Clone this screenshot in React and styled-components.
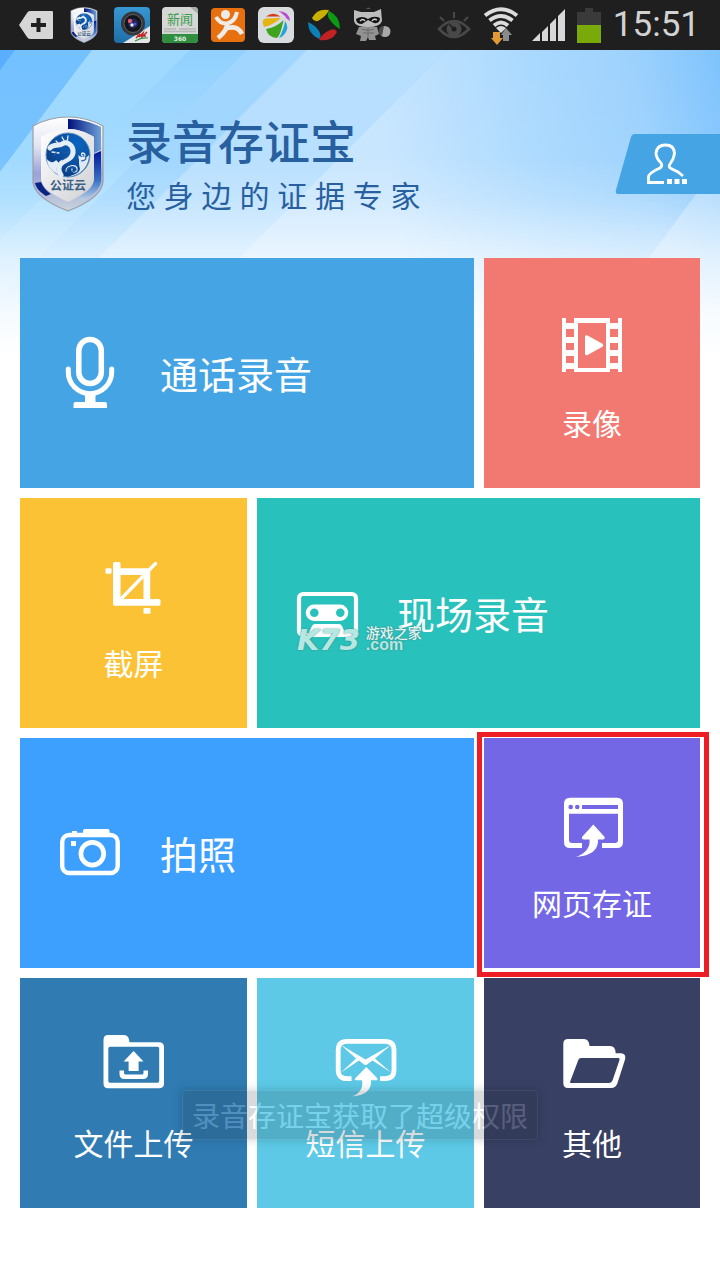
import React from 'react';
import styled, { createGlobalStyle } from 'styled-components';

const GlobalStyle = createGlobalStyle`
  * {
    box-sizing: border-box;
  }
  body {
    margin: 0;
    background-color: #ffffff;
    font-family: "Noto Sans CJK SC", "Noto Sans", sans-serif;
  }
  svg {
    display: block;
    flex: none;
    overflow: visible;
  }
`;

const Page = styled.div`
  position: relative;
  min-height: 100vh;
  overflow: hidden;
`;

// Status bar
const StatusBar = styled.div`
  position: relative;
  display: flex;
  justify-content: space-between;
  align-items: center;
  height: 50px;
  padding: 0 20px 0 18px;
  background-color: #1f1f1f;
`;

const StatusGroup = styled.div`
  display: flex;
  align-items: center;
  gap: 12px;
`;

const Clock = styled.time`
  font-family: Roboto, sans-serif;
  font-size: 35px;
  line-height: 48px;
  color: #d2d2d2;
`;

// Header
const Sky = styled.svg`
  position: absolute;
  top: 50px;
  left: 0;
  width: 100%;
  height: 310px;
`;

const Header = styled.header`
  position: relative;
  display: flex;
  align-items: flex-start;
  gap: 22px;
  height: 208px;
  padding: 66px 0 0 32px;
`;

const Heading = styled.div`
  flex: 1;
  color: #285f9f;
`;

const Title = styled.h1`
  margin: 0 0 14px;
  font-size: 46px;
  line-height: 46px;
  font-weight: 500;
`;

const Slogan = styled.p`
  margin: 0;
  font-family: "Noto Sans", "Noto Sans CJK SC", sans-serif;
  font-size: 30px;
  line-height: 40px;
  white-space: nowrap;
`;

const AccountButton = styled.button`
  margin-top: 18px;
  padding: 0;
  border: none;
  background: none;
  cursor: pointer;
`;

// Tiles
const Tiles = styled.main`
  position: relative;
  display: grid;
  grid-template-columns: 227fr 217fr 216fr;
  grid-auto-rows: 230px;
  gap: 10px;
  padding: 0 20px;
`;

const Tile = styled.button`
  position: relative;
  display: flex;
  flex-direction: ${(p) => (p.$wide ? 'row' : 'column')};
  align-items: center;
  gap: ${(p) => (p.$wide ? '38px' : '26px')};
  grid-column: span ${(p) => (p.$wide ? 2 : 1)};
  padding: ${(p) => (p.$wide ? '0 38px' : '56px 0 0')};
  border: none;
  background-color: ${(p) => p.$color};
  color: #ffffff;
  font-family: inherit;
  font-weight: 400;
  font-size: ${(p) => (p.$wide ? '38px' : '30px')};
  line-height: ${(p) => (p.$wide ? '46px' : '36px')};
  cursor: pointer;
`;

const Highlight = styled.span`
  position: absolute;
  top: -6px;
  right: -9px;
  bottom: -9px;
  left: -7px;
  border: 5px solid #ee1c24;
`;

const Watermark = styled.span`
  position: absolute;
  top: 127px;
  left: 40px;
  display: flex;
  align-items: flex-start;
  gap: 6px;
  color: #b5e8e2;
  text-shadow: 0 0 2px #47807f;
`;

const WatermarkLogo = styled.span`
  font: italic bold 29px/30px "DejaVu Sans", sans-serif;
`;

const WatermarkName = styled.span`
  display: grid;
  text-align: left;
  font-size: 14px;
  line-height: 14px;
  font-weight: 500;
  color: #e4f3f1;
`;

const WatermarkDomain = styled.span`
  font: bold 16px/12px "Liberation Sans", sans-serif;
  color: #b5e8e2;
`;

const Toast = styled.div`
  position: absolute;
  top: 832px;
  left: 50%;
  transform: translateX(-50%);
  padding: 4px 9px;
  border: 1px solid #777777;
  border-radius: 4px;
  background-color: #1c2228;
  box-shadow: 0 0 8px #000000;
  color: #ffffff;
  font-size: 28px;
  line-height: 40px;
  white-space: nowrap;
  opacity: 0.16;
  pointer-events: none;
`;

function Shield({ width, height, id }) {
  return (
    <svg width={width} height={height} viewBox="0 0 72 96">
      <defs>
        <linearGradient id={id + 'rim'} x1="0" y1="0" x2="0" y2="1">
          <stop offset="0" stopColor="#ffffff" />
          <stop offset="0.3" stopColor="#e4e6f2" />
          <stop offset="0.6" stopColor="#9ba2d8" />
          <stop offset="1" stopColor="#c9d3dc" />
        </linearGradient>
        <linearGradient id={id + 'blue'} x1="0" y1="0" x2="1" y2="0">
          <stop offset="0" stopColor="#00107c" />
          <stop offset="1" stopColor="#6fa0d8" />
        </linearGradient>
        <linearGradient id={id + 'side'} x1="0" y1="0" x2="0" y2="1">
          <stop offset="0" stopColor="#00189a" />
          <stop offset="0.6" stopColor="#3c74c4" />
          <stop offset="1" stopColor="#c0d4e8" />
        </linearGradient>
        <linearGradient id={id + 'body'} x1="0" y1="0" x2="1" y2="1">
          <stop offset="0" stopColor="#ffffff" />
          <stop offset="1" stopColor="#cfd0d3" />
        </linearGradient>
        <radialGradient id={id + 'ball'} cx="0.7" cy="0.25" r="0.8">
          <stop offset="0" stopColor="#0a66c0" />
          <stop offset="1" stopColor="#0b3d84" />
        </radialGradient>
      </defs>
      <path d="M36 1C48 1 60 4 71 10V66C70 78 54 88 36 95C18 88 2 78 1 66V10C12 4 24 1 36 1Z" fill={`url(#${id}rim)`} stroke="#9a9fa6" strokeWidth="1.2" />
      <path d="M36 3C48 3 59 6 69 11V34L62 37V21C54 16 45 13 36 13Z" fill={`url(#${id}blue)`} />
      <path d="M62 38L69 35V65C68 74 60 80 50 85L46 80C56 76 62 71 62 62Z" fill={`url(#${id}side)`} />
      <path d="M3 67L9 66C11 71 14 75 19 78L14 80C8 76 4 72 3 67Z" fill="#0a2484" />
      <path d="M36 13C46 13 54 16 62 21V62C62 73 48 80 36 86C24 80 9 73 9 62V21C18 16 27 13 36 13Z" fill={`url(#${id}body)`} />
      <circle cx="36" cy="39" r="22" fill={`url(#${id}ball)`} stroke="#5a8fc4" strokeWidth="1" />
      <path d="M15 43C18 47 22 47 24 44L27 47C24 51 24 56 27 58.500C19 56 15 49 15 43Z" fill="#e5edf6" />
      <path d="M57 39C57 50 49 60 36 60.500C42 59 47 57 48 53C46 47 48 43 46 39C50 42 55 42 57 39Z" fill="#dfe8f3" />
      <path d="M18 32C22 27 26 31 30 28C34 25 40 28 41 34C42 42 35 44 31 46C26 49 26 55 29 59" fill="none" stroke="#e5edf6" strokeWidth="5" strokeLinecap="round" />
      <g fill="none" stroke="#e5edf6" strokeLinecap="round" strokeWidth="1.3">
        <path d="M30 21L34 28M36 20L35 27M24 25L28 29M20 36L27 37" />
        <path d="M34 55C34 49 46 47 45 54C44 57 39 56 40 53M47 42C53 44 55 38 51 37C49 37 49 40 51 40" />
      </g>
      <g fill="none" stroke="#1a5ba4" strokeWidth="1.2">
        <path d="M27 32L34 33M30 36L37 37M25 35L22 40M37 34C39 39 35 42 30 44" />
        <path d="M35 55C35 51 44 49 44 54C43 56 40 56 40 54M49 45C54 45 55 42 53 40" />
      </g>
      <text x="36" y="74" textAnchor="middle" fontSize="12" fontWeight="700" fill="#3b5f87">公证云</text>
    </svg>
  );
}

function BackIcon() {
  return (
    <svg width="36" height="36" viewBox="0 0 36 36">
      <path d="M1 18L9 6Q10 4 12 4H34Q35 4 35 5V31Q35 32 34 32H12Q10 32 9 30Z" fill="#d6d6d6" />
      <path d="M20.500 11V25M13 18H28" stroke="#1f1f1f" strokeWidth="4" />
    </svg>
  );
}

function CameraAppIcon() {
  return (
    <svg width="36" height="36" viewBox="0 0 36 36">
      <defs>
        <linearGradient id="camapp" x1="0" y1="0" x2="0" y2="1">
          <stop offset="0" stopColor="#3798d4" />
          <stop offset="1" stopColor="#1f6da6" />
        </linearGradient>
      </defs>
      <rect width="36" height="36" rx="4" fill="url(#camapp)" />
      <path d="M9 36L36 19V33Q36 36 33 36Z" fill="#e4e6e8" />
      <circle cx="19" cy="16.500" r="12" fill="#34383d" />
      <circle cx="19" cy="16.500" r="9" fill="#14161a" stroke="#5a5f66" strokeWidth="1" />
      <circle cx="19" cy="16.500" r="5" fill="#20265c" />
      <circle cx="16" cy="14" r="2.200" fill="#e05a7a" />
      <circle cx="18" cy="18" r="1.800" fill="#e8e8f4" />
      <circle cx="21" cy="17" r="1.500" fill="#4a54e0" />
      <path d="M22 31L26 27L25 30L29 26L28 30L33 25M23 29H32" stroke="#c22a2a" strokeWidth="1.600" fill="none" />
      <path d="M21 34Q28 30 34 31" stroke="#3a9a4a" strokeWidth="1.200" fill="none" />
    </svg>
  );
}

function NewsIcon() {
  return (
    <svg width="36" height="36" viewBox="0 0 36 36">
      <rect width="36" height="36" rx="4" fill="#d5d7d5" />
      <path d="M28 0H32Q36 0 36 4V7Z" fill="#a9ada9" />
      <path d="M2 22H14M17 22H34M2 24.500H34" stroke="#b4b8b4" strokeWidth="1.400" />
      <path d="M0 27H36V32Q36 36 32 36H4Q0 36 0 32Z" fill="#2f8f3e" />
      <text x="18" y="17" textAnchor="middle" fontSize="13" fill="#3c9c4c">新闻</text>
      <text x="18" y="34" textAnchor="middle" fontSize="6" fontWeight="700" fontFamily="DejaVu Sans, sans-serif" fill="#e2efe2">360</text>
    </svg>
  );
}

function ReviewIcon() {
  return (
    <svg width="36" height="36" viewBox="0 0 36 36">
      <rect x="1" y="1" width="34" height="34" rx="4" fill="#e8700f" />
      <circle cx="15.500" cy="7.500" r="4.500" fill="#efebe6" />
      <path d="M6 10Q10 17 17 16.500Q25 15 27 5" fill="none" stroke="#efebe6" strokeWidth="4" />
      <path d="M17 16Q18 23 8 31M15 22Q27 17 32 27" fill="none" stroke="#efebe6" strokeWidth="4.600" />
    </svg>
  );
}

function LeafIcon() {
  return (
    <svg width="36" height="36" viewBox="0 0 36 36">
      <rect width="36" height="36" rx="6" fill="#d9dcdf" />
      <path d="M8 9.500Q15 4 22.500 9.500Z" fill="#d93a18" />
      <path d="M20 4Q31 4 32 14L28.500 11.500Q26 7 20 4Z" fill="#b84bd2" />
      <path d="M6 20Q3 13 7 11.500L23 11Q15 18 6 20Z" fill="#e6b411" />
      <path d="M8 22Q19 20 25.500 13Q22 31 18 31Q10 30 8 22Z" fill="#3fa320" />
      <path d="M27 14Q31 20 28 25Q25 30 21 31Q26 22 27 14Z" fill="#24a5d8" />
    </svg>
  );
}

function RingIcon() {
  return (
    <svg width="36" height="36" viewBox="0 0 36 36">
      <path d="M6 11Q11 1 23 3Q21 8 15 12Q9 17 6 11Z" fill="#c9b000" />
      <path d="M23 4Q34 9 34 22Q28 19 24 13Q20 8 23 4Z" fill="#0d9a12" />
      <path d="M31 25Q26 35 13 33Q16 27 22 24Q29 20 31 25Z" fill="#c22222" />
      <path d="M13 32Q2 27 2 15Q9 18 13 24Q16 29 13 32Z" fill="#0c80b4" />
    </svg>
  );
}

function RaccoonIcon() {
  return (
    <svg width="36" height="36" viewBox="0 0 36 36">
      <circle cx="31" cy="24.500" r="5.500" fill="#a8a8a8" />
      <path d="M25 26Q24 19 30 19L28 29Z" fill="#4c4c4c" />
      <path d="M0 3L7 5H20L27 2L28 14Q26 20 14 20Q1 20 0 14Z" fill="#bdbdbd" />
      <path d="M12 2Q14 -1 17 2Z" fill="#555" />
      <path d="M2 12Q8 8 14 12Q20 8 26 11Q26 17 20 16L14 13L8 17Q2 17 2 12Z" fill="#151515" />
      <path d="M6 14Q9 11 11 14M18 14Q20 11 23 13" stroke="#d6d6d6" strokeWidth="1.300" fill="none" />
      <path d="M5 20H23L25 27L21 29L22 33H15L14 30L12 34H6L7 29L2 27Z" fill="#929292" />
      <path d="M8 22Q14 25 20 22M9 26H20M14 21V30" stroke="#6a6a6a" strokeWidth="1" fill="none" />
    </svg>
  );
}

function EyeIcon() {
  return (
    <svg width="34" height="36" viewBox="0 0 34 36">
      <path d="M2 22Q17 6 32 22Q17 38 2 22Z" fill="none" stroke="#484848" strokeWidth="2.600" />
      <circle cx="17" cy="22" r="7.500" fill="#484848" />
      <circle cx="17" cy="22" r="2.500" fill="#1f1f1f" />
      <path d="M17 22L12 17" stroke="#1f1f1f" strokeWidth="1.500" />
      <path d="M17 5V11M3 10L7 14M31 10L27 14" stroke="#484848" strokeWidth="2.200" />
    </svg>
  );
}

function WifiIcon() {
  return (
    <svg width="36" height="36" viewBox="0 0 36 36">
      <g fill="none" stroke="#dcdcdc" strokeWidth="4">
        <path d="M2 8.500Q18 -4 34 8.500" />
        <path d="M6.500 13.500Q18 4.500 29.500 13.500" />
        <path d="M11 18.500Q18 12.500 25 18.500" />
      </g>
      <path d="M13 21Q18 17 23 21L18 26Z" fill="#dcdcdc" />
      <path d="M10 25H17V31H20L14 38L8 31H10Z" fill="#e09a35" />
      <path d="M20 34H26V28H29L23 21L18 28H20Z" fill="#8b8b8b" />
    </svg>
  );
}

function SignalIcon() {
  return (
    <svg width="34" height="36" viewBox="0 0 34 36">
      <path d="M1 34L9 26V34ZM11 34V25L17 19V34ZM19 34V17L25 11V34ZM27 34V9L34 2V34Z" fill="#d8d8d8" />
    </svg>
  );
}

function BatteryIcon() {
  return (
    <svg width="24" height="36" viewBox="0 0 24 36">
      <path d="M0 5H8V1H16V5H24V18H0Z" fill="#3a3a3a" />
      <path d="M0 18H24V36H0Z" fill="#7aaa09" />
    </svg>
  );
}

function SkyBackground() {
  return (
    <Sky viewBox="0 0 720 310" preserveAspectRatio="none">
      <defs>
        <linearGradient id="skyBase" x1="0" y1="0" x2="0" y2="1">
          <stop offset="0" stopColor="#8bcfff" />
          <stop offset="1" stopColor="#bfe6ff" />
        </linearGradient>
        <linearGradient id="skyRight" gradientUnits="userSpaceOnUse" x1="380" y1="80" x2="720" y2="20">
          <stop offset="0" stopColor="#c8e6ff" />
          <stop offset="0.45" stopColor="#abd9fe" />
          <stop offset="0.75" stopColor="#9ed2fd" />
          <stop offset="1" stopColor="#80c4fd" />
        </linearGradient>
        <linearGradient id="skyFade" x1="0" y1="0" x2="0" y2="1">
          <stop offset="0" stopColor="#fff" stopOpacity="0" />
          <stop offset="0.35" stopColor="#fff" stopOpacity="0.02" />
          <stop offset="0.48" stopColor="#fff" stopOpacity="0.18" />
          <stop offset="0.67" stopColor="#fff" stopOpacity="0.62" />
          <stop offset="0.85" stopColor="#fff" stopOpacity="0.9" />
          <stop offset="1" stopColor="#fff" stopOpacity="1" />
        </linearGradient>
        <linearGradient id="skyBand" x1="0" y1="0" x2="0" y2="1">
          <stop offset="0" stopColor="#92d1ff" />
          <stop offset="0.5" stopColor="#a8dcff" />
        </linearGradient>
      </defs>
      <path d="M0 0H720V310H0Z" fill="url(#skyBase)" />
      <path d="M0 0H92L0 122Z" fill="#74c1ff" />
      <path d="M0 0H15L0 20Z" fill="#5aaeff" />
      <path d="M92 0H190L0 190V122Z" fill="#9fd9ff" />
      <path d="M190 0H247L0 247V190Z" fill="url(#skyBand)" />
      <path d="M247 0H307L0 307V247Z" fill="#a0d6ff" />
      <path d="M307 0H447L137 310H0V307Z" fill="#b7dfff" />
      <path d="M447 0H720V310H137Z" fill="url(#skyRight)" />
      <path d="M720 112L625 240L580 310H720Z" fill="#fff" fillOpacity="0.3" />
      <path d="M0 0H720V310H0Z" fill="url(#skyFade)" />
    </Sky>
  );
}

function AccountIcon() {
  return (
    <svg width="105" height="60" viewBox="0 0 105 60">
      <path d="M20 0H105V60H3Q0 60 1 56L16 3Q17 0 20 0Z" fill="#45a5e4" />
      <path d="M49 48.500H33.500V43Q33.500 39 45 34Q48 32 46 29Q41 24 41 19Q42 11 50.500 11Q59 11 59.500 19Q59 25 55 30Q53 33 56 34.500L63 38L68 42" fill="none" stroke="#fff" strokeWidth="2.800" />
      <path d="M52 45H57V50H52ZM59.500 45H64.500V50H59.500ZM67 45H72V50H67Z" fill="#fff" />
    </svg>
  );
}

function MicIcon() {
  return (
    <svg width="64" height="80" viewBox="0 0 64 80" fill="none" stroke="#fff">
      <rect x="20.800" y="6.500" width="22.500" height="44" rx="11.200" strokeWidth="5.500" />
      <path d="M10.300 36V39A21.700 21.700 0 0 0 53.700 39V36" strokeWidth="5" strokeLinecap="round" />
      <path d="M27 61H37.500V69H47Q49 69 49 71V75H15.500V71Q15.500 69 17.500 69H27Z" fill="#fff" stroke="none" />
    </svg>
  );
}

function FilmIcon() {
  return (
    <svg width="64" height="64" viewBox="0 0 64 64" fill="#fff">
      <path d="M2 4H6V58H2ZM58 4H62V58H58ZM14 4H18V58H14ZM46 4H50V58H46ZM14 4H50V9H14ZM14 54H50V58H14Z" />
      <path d="M6 9H14V15H6ZM6 23H14V29H6ZM6 36H14V42H6ZM6 49H14V55H6ZM50 9H58V15H50ZM50 23H58V29H50ZM50 36H58V42H50ZM50 49H58V55H50Z" />
      <path d="M25 23Q25 20.500 27.500 21.500L42 29.500Q44.500 31.300 42 33L27.500 41Q25 42 25 39.500Z" />
    </svg>
  );
}

function CropIcon() {
  return (
    <svg width="64" height="64" viewBox="0 0 64 64" fill="#fff">
      <path fillRule="evenodd" d="M12.500 8H17Q18.500 8 18.500 9.500V14.300H48.200V45H57Q58.500 45 58.500 46.500V50Q58.500 51.700 57 51.700H13Q11 51.700 11 50V9.500Q11 8 12.500 8ZM18.500 21V45H41.500V21Z" />
      <rect x="3.500" y="14.300" width="6" height="5.500" rx="1" />
      <rect x="41.500" y="54" width="7" height="5.700" rx="1" />
      <path d="M17 47L53.500 9.500" stroke="#fff" strokeWidth="3.400" strokeLinecap="round" />
    </svg>
  );
}

function TapeIcon() {
  return (
    <svg width="64" height="80" viewBox="0 0 64 80" fill="#fff">
      <rect x="4" y="21" width="57" height="41" rx="4" fill="none" stroke="#fff" strokeWidth="4.200" />
      <path fillRule="evenodd" d="M19 31.500H45A8.200 8.200 0 0 1 45 48H19A8.200 8.200 0 0 1 19 31.500ZM19.300 35.400A4.300 4.300 0 1 0 19.300 44A4.300 4.300 0 1 0 19.300 35.400ZM45.300 35.400A4.300 4.300 0 1 0 45.300 44A4.300 4.300 0 1 0 45.300 35.400Z" />
      <path d="M20 51H44Q46 51 47 53L51 62H13L17 53Q18 51 20 51Z" />
    </svg>
  );
}

function PhotoIcon() {
  return (
    <svg width="64" height="80" viewBox="0 0 64 80" fill="#fff">
      <rect x="4.200" y="22" width="55.500" height="38" rx="7" fill="none" stroke="#fff" strokeWidth="4.400" />
      <path d="M27 16H50Q51.500 16 51.500 18V22H25V18Q25 16 27 16ZM14 18H19V21H14ZM13 28H18V33H13Z" />
      <circle cx="34.300" cy="40.700" r="11.400" fill="none" stroke="#fff" strokeWidth="4.700" />
    </svg>
  );
}

function WebIcon() {
  return (
    <svg width="64" height="64" viewBox="0 0 64 64" fill="#fff">
      <path fillRule="evenodd" d="M10 3.700H57Q63 3.700 63 9.700V48Q63 54 57 54H42V49H55Q58 49 58 46V19.700H9V46Q9 49 12 49H22V54H10Q4 54 4 48V9.700Q4 3.700 10 3.700ZM22 11V15H58V11ZM10.700 10.700A2.300 2.300 0 1 0 10.700 15.300A2.300 2.300 0 1 0 10.700 10.700ZM17.300 10.700A2.300 2.300 0 1 0 17.300 15.300A2.300 2.300 0 1 0 17.300 10.700Z" />
      <path d="M33.300 30.500L44.700 43Q45 45.500 43 45.500H38Q39 61 16 63Q31 57 29.500 45.500H24Q21.500 45.500 22 43Z" />
    </svg>
  );
}

function FileUploadIcon() {
  return (
    <svg width="64" height="64" viewBox="0 0 64 64" fill="#fff">
      <path fillRule="evenodd" d="M6 1H22Q27 1 27.500 8.300H57Q62 8.300 62 13V49.500Q62 54.300 57 54.300H6Q1.500 54.300 1.500 49.500V6Q1.500 1 6 1ZM8 12.700Q6.300 12.700 6.300 14.500V47Q6.300 48.700 8 48.700H55.500Q57.200 48.700 57.200 47V14.500Q57.200 12.700 55.500 12.700Z" />
      <path d="M31.600 17L41.500 27.500H36.600V37H26.600V27.500H21.600Z" />
      <path d="M17.500 36.500H22V39Q22 40.500 23.500 40.500H40Q41.500 40.500 41.500 39V36.500H46V40Q46 45 41 45H22.500Q17.500 45 17.500 40Z" />
    </svg>
  );
}

function MailUploadIcon() {
  return (
    <svg width="64" height="64" viewBox="0 0 64 64" fill="#fff">
      <path d="M17.500 44.600H13Q4.200 44.600 4.200 36V16Q4.200 7.300 13 7.300H51Q60 7.300 60 16V36Q60 44.600 51 44.600H46" fill="none" stroke="#fff" strokeWidth="4.800" />
      <path d="M7 11L31.500 25.500L57 11L41 24.500L57 38.500L38.500 26.500L33 30.500Q31.500 31.500 30 30.500L25 26.500L7 38.500L22 24.500Z" />
      <path d="M32.300 33L43 44Q44.500 46.300 42 46.300H37Q38 61 18 62.500Q30 58 28 46.300H22.500Q19.500 46.300 21.500 44Z" />
    </svg>
  );
}

function FolderIcon() {
  return (
    <svg width="64" height="64" viewBox="0 0 64 64" fill="#fff">
      <path fillRule="evenodd" d="M8 5H24Q29 5 29.500 12H50Q55.500 12 55.700 19.300H61Q66 19.500 65.200 25L57.500 49Q56 54 51 54H8Q3.300 54 3.300 49V10Q3.300 5 8 5ZM21 24Q19 24 18.300 26L10 48Q9.800 49 11 49H48.500Q51.500 49 52.500 46.500L59.500 26Q60 24 58.500 24Z" />
    </svg>
  );
}

const tiles = [
  { label: '通话录音', color: '#45a5e4', icon: MicIcon, wide: true },
  { label: '录像', color: '#f27971', icon: FilmIcon },
  { label: '截屏', color: '#fcc236', icon: CropIcon },
  { label: '现场录音', color: '#28c1bc', icon: TapeIcon, wide: true, watermark: true },
  { label: '拍照', color: '#3da0ff', icon: PhotoIcon, wide: true },
  { label: '网页存证', color: '#7367e6', icon: WebIcon, highlight: true },
  { label: '文件上传', color: '#2f7bb2', icon: FileUploadIcon },
  { label: '短信上传', color: '#5dc9e6', icon: MailUploadIcon },
  { label: '其他', color: '#384064', icon: FolderIcon },
];

function App() {
  return (
    <Page>
      <GlobalStyle />
      <SkyBackground />

      {/* Status bar */}
      <StatusBar>
        <StatusGroup>
          <BackIcon />
          <Shield width="36" height="36" id="mini" />
          <CameraAppIcon />
          <NewsIcon />
          <ReviewIcon />
          <LeafIcon />
          <RingIcon />
          <RaccoonIcon />
        </StatusGroup>
        <StatusGroup>
          <EyeIcon />
          <WifiIcon />
          <SignalIcon />
          <BatteryIcon />
          <Clock>15:51</Clock>
        </StatusGroup>
      </StatusBar>

      {/* Header */}
      <Header>
        <Shield width="72" height="96" id="logo" />
        <Heading>
          <Title>录音存证宝</Title>
          <Slogan>您 身 边 的 证 据 专 家</Slogan>
        </Heading>
        <AccountButton aria-label="account">
          <AccountIcon />
        </AccountButton>
      </Header>

      {/* Tiles */}
      <Tiles>
        {tiles.map(({ label, color, icon: Icon, wide, watermark, highlight }) => (
          <Tile key={label} $color={color} $wide={wide}>
            <Icon />
            <span>{label}</span>
            {highlight && <Highlight />}
            {watermark && (
              <Watermark>
                <WatermarkLogo>K73</WatermarkLogo>
                <WatermarkName>
                  游戏之家
                  <WatermarkDomain>.com</WatermarkDomain>
                </WatermarkName>
              </Watermark>
            )}
          </Tile>
        ))}
        <Toast role="status">录音存证宝获取了超级权限</Toast>
      </Tiles>
    </Page>
  );
}

export default App;
